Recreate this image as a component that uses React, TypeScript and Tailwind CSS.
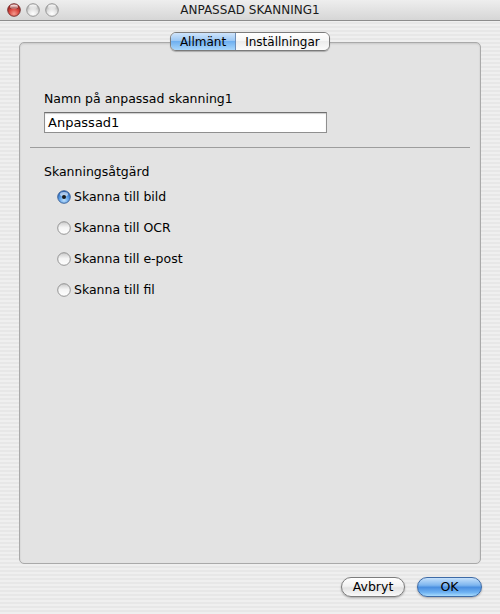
import React from "react";

function Light({ kind }: { kind: "red" | "gray" }) {
  const id = kind === "red" ? "lr" : "lg";
  return (
    <svg width="14" height="14" viewBox="0 0 14 14" className="block">
      <defs>
        <radialGradient id={id + "b"} cx="50%" cy="80%" r="65%">
          {kind === "red" ? (
            <>
              <stop offset="0%" stopColor="#f59a8e" />
              <stop offset="60%" stopColor="#d9463f" />
              <stop offset="100%" stopColor="#a42a26" />
            </>
          ) : (
            <>
              <stop offset="0%" stopColor="#ffffff" />
              <stop offset="60%" stopColor="#e2e2e2" />
              <stop offset="100%" stopColor="#b9b9b9" />
            </>
          )}
        </radialGradient>
        <linearGradient id={id + "h"} x1="0" y1="0" x2="0" y2="1">
          <stop offset="0%" stopColor="#ffffff" stopOpacity="0.95" />
          <stop offset="100%" stopColor="#ffffff" stopOpacity="0.1" />
        </linearGradient>
      </defs>
      <circle cx="7" cy="7" r="6.3" fill={`url(#${id}b)`} stroke={kind === "red" ? "#6e2a2a" : "#8e8e8e"} strokeWidth="0.9" />
      {kind === "red" ? (
        <path d="M2.6 6.2 C3 3.2 11 3.2 11.4 6.2 C10 5 4 5 2.6 6.2 Z" fill="#3a1414" opacity="0.65" />
      ) : null}
      <ellipse cx="7" cy="4" rx="4" ry="2.4" fill={`url(#${id}h)`} />
    </svg>
  );
}

function Radio({ checked, label }: { checked?: boolean; label: string }) {
  return (
    <div className="flex h-[16px] items-center">
      <svg width="14" height="14" viewBox="0 0 14 14" className="block">
        <defs>
          <radialGradient id="rb" cx="50%" cy="75%" r="70%">
            <stop offset="0%" stopColor="#bfe0fb" />
            <stop offset="55%" stopColor="#5a9de6" />
            <stop offset="100%" stopColor="#2d64b5" />
          </radialGradient>
          <linearGradient id="rw" x1="0" y1="0" x2="0" y2="1">
            <stop offset="0%" stopColor="#c9c9c9" />
            <stop offset="45%" stopColor="#f4f4f4" />
            <stop offset="100%" stopColor="#ffffff" />
          </linearGradient>
        </defs>
        <circle cx="7" cy="7" r="6.3" fill={checked ? "url(#rb)" : "url(#rw)"} stroke={checked ? "#3a5f93" : "#8a8a8a"} strokeWidth="0.9" />
        {checked ? (
          <>
            <ellipse cx="7" cy="4.2" rx="4" ry="2.3" fill="#ffffff" opacity="0.55" />
            <circle cx="7" cy="7" r="2" fill="#1a1a1a" />
          </>
        ) : null}
      </svg>
      <span className="ml-[3px] text-[12.5px] leading-[16px] text-black">{label}</span>
    </div>
  );
}

export default function App() {
  return (
    <div
      className="flex h-[614px] w-[500px] flex-col overflow-hidden bg-[repeating-linear-gradient(180deg,#efefef_0px,#efefef_2px,#e7e7e7_2px,#e7e7e7_4px)]"
      style={{ fontFamily: '"DejaVu Sans", "Liberation Sans", sans-serif' }}
    >
      {/* title bar */}
      <div className="relative flex h-[21px] items-center border-b border-[#8c8c8c] bg-[linear-gradient(180deg,#eeeeee,#d6d6d6)]">
        <div className="flex items-center gap-[5px] pl-[7px]">
          <Light kind="red" />
          <Light kind="gray" />
          <Light kind="gray" />
        </div>
        <div className="absolute inset-x-0 top-0 flex h-[20px] items-center justify-center text-[12px] text-[#1a1a1a]">
          ANPASSAD SKANNING1
        </div>
      </div>

      <div className="flex flex-1 flex-col px-[19px] pt-[11px]">
        {/* tabs */}
        <div className="relative z-10 -mb-[9px] flex justify-center">
          <div className="flex h-[19px] overflow-hidden rounded-[6px] border border-[#7b7b7b] shadow-[0_1px_1px_rgba(0,0,0,0.25)]">
            <div className="flex w-[65px] items-center justify-center border-r border-[#6f8fb8] bg-[linear-gradient(180deg,#cfe4fb_0%,#9cc8f4_45%,#6fb0f0_50%,#a8d6fb_100%)] text-[12px] text-black">
              Allmänt
            </div>
            <div className="flex w-[93px] items-center justify-center bg-[linear-gradient(180deg,#ffffff_0%,#f6f6f6_45%,#ececec_50%,#fbfbfb_100%)] text-[12px] text-black">
              Inställningar
            </div>
          </div>
        </div>

        {/* panel */}
        <div className="flex h-[522px] flex-col rounded-[5px] border border-[#a9a9a9] bg-[#e3e3e3] shadow-[inset_0_1px_2px_rgba(0,0,0,0.12)]">
          <div className="pl-[24px] pt-[48px]">
            <div className="text-[12.5px] leading-[16px] text-black">Namn på anpassad skanning1</div>
            <div className="mt-[5px] flex h-[21px] w-[283px] items-center border border-[#8f8f8f] border-t-[#6f6f6f] bg-white pl-[3px] text-[13px] text-black shadow-[inset_0_1px_1px_rgba(0,0,0,0.2)]">
              Anpassad1
            </div>
          </div>
          <div className="mx-[10px] mt-[14px] h-[1px] bg-[#9d9d9d]" />
          <div className="pl-[24px] pt-[16px]">
            <div className="text-[12.5px] leading-[16px] text-black">Skanningsåtgärd</div>
            <div className="mt-[9px] flex flex-col gap-[15px] pl-[13px]">
              <Radio checked label="Skanna till bild" />
              <Radio label="Skanna till OCR" />
              <Radio label="Skanna till e-post" />
              <Radio label="Skanna till fil" />
            </div>
          </div>
        </div>

        {/* buttons */}
        <div className="mt-[13px] flex justify-end gap-[12px] pr-[-1px]">
          <div className="flex h-[20px] w-[64px] items-center justify-center rounded-full border border-[#7d7d7d] bg-[linear-gradient(180deg,#ffffff_0%,#f2f2f2_45%,#e2e2e2_55%,#fafafa_100%)] text-[12.5px] text-black shadow-[0_1px_2px_rgba(0,0,0,0.3)]">
            Avbryt
          </div>
          <div className="-mr-[1px] flex h-[20px] w-[65px] items-center justify-center rounded-full border border-[#3d6aa6] bg-[linear-gradient(180deg,#c6e1fb_0%,#7eb6ef_40%,#4a8fe0_52%,#6fb2f2_80%,#a9dcfc_100%)] text-[12.5px] text-black shadow-[0_1px_2px_rgba(0,0,0,0.3)]">
            OK
          </div>
        </div>
      </div>
    </div>
  );
}
